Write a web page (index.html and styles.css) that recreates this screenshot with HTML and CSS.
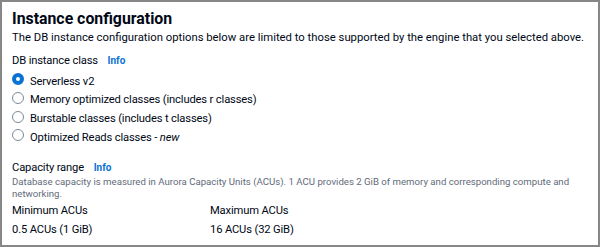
FILE: index.html
```html
<!DOCTYPE html>
<html lang="en">
<head>
<meta charset="utf-8">
<title>Instance configuration</title>
<link rel="stylesheet" href="styles.css">
</head>
<body>
<section class="panel">
  <h2 class="title">Instance configuration</h2>
  <p class="subtitle">The DB instance configuration options below are limited to those supported by the engine that you selected above.</p>

  <div class="field">
    <div class="label">DB instance class <a class="info" href="#">Info</a></div>
    <ul class="radios">
      <li class="radio"><span class="dot checked"></span><span class="radio-text">Serverless v2</span></li>
      <li class="radio"><span class="dot"></span><span class="radio-text">Memory optimized classes (includes r classes)</span></li>
      <li class="radio"><span class="dot"></span><span class="radio-text">Burstable classes (includes t classes)</span></li>
      <li class="radio"><span class="dot"></span><span class="radio-text">Optimized Reads classes - <em>new</em></span></li>
    </ul>
  </div>

  <div class="field capacity">
    <div class="label">Capacity range <a class="info" href="#">Info</a></div>
    <p class="desc">Database capacity is measured in Aurora Capacity Units (ACUs). 1 ACU provides 2 GiB of memory and corresponding compute and networking.</p>
    <div class="acus">
      <div class="acu">
        <div class="acu-label">Minimum ACUs</div>
        <div class="acu-value">0.5 ACUs (1 GiB)</div>
      </div>
      <div class="acu">
        <div class="acu-label">Maximum ACUs</div>
        <div class="acu-value">16 ACUs (32 GiB)</div>
      </div>
    </div>
  </div>
</section>
</body>
</html>
```

FILE: styles.css
```css
* { box-sizing: border-box; }
html, body { margin: 0; padding: 0; background: #fff; }
body {
  font-family: Roboto, "Liberation Sans", sans-serif;
  color: #000716;
}
.panel {
  width: 600px;
  height: 247px;
  border: 2px solid #878787;
  padding: 6.7px 10px 0 10px;
  overflow: hidden;
}
.title {
  margin: 0;
  font-size: 15.85px;
  line-height: 20px;
  font-weight: 700;
}
.subtitle {
  margin: 0;
  font-size: 11.3px;
  line-height: 17px;
  white-space: nowrap;
}
.field { margin-top: 6.5px; }
.label {
  font-size: 11.2px;
  letter-spacing: -0.15px;
  line-height: 17px;
}
.info {
  color: #0972d3;
  font-weight: 700;
  font-size: 10px;
  letter-spacing: 0;
  text-decoration: none;
  margin-left: 7px;
}
.radios {
  list-style: none;
  margin: 0.8px 0 0 0;
  padding: 0;
}
.radio {
  display: flex;
  align-items: center;
  gap: 6px;
  height: 18.7px;
  font-size: 11.2px;
  letter-spacing: -0.15px;
  line-height: 17px;
}
.radio-text { padding-top: 3.4px; }
.dot {
  width: 12px;
  height: 12px;
  border-radius: 50%;
  border: 1.5px solid #7d8998;
  flex: none;
}
.dot.checked {
  border: 4px solid #0972d3;
  background: #fff;
}
.capacity { margin-top: 14.2px; }
.desc {
  margin: 0;
  font-size: 9.65px;
  line-height: 12px;
  color: #5f6b7a;
}
.acus {
  display: grid;
  grid-template-columns: 198px 1fr;
  margin-top: 1.8px;
}
.acu-label, .acu-value {
  font-size: 11.2px;
  letter-spacing: -0.15px;
  line-height: 17px;
}
.acu-value { margin-top: 2px; }
```
